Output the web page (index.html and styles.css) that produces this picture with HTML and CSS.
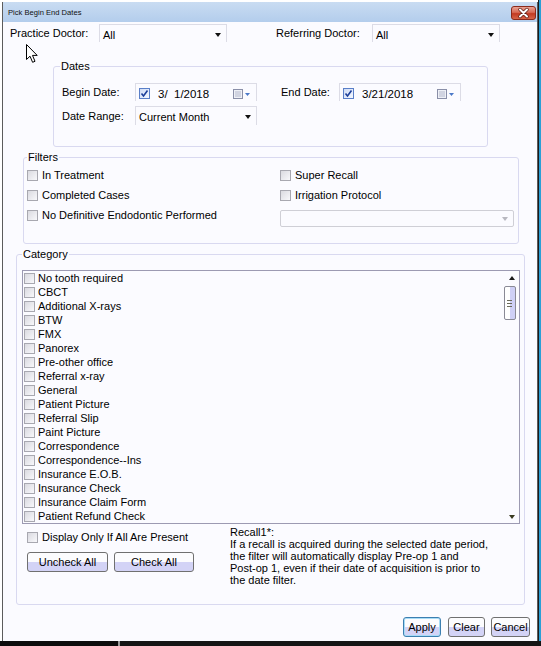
FILE: index.html
```html
<!DOCTYPE html>
<html>
<head>
<meta charset="utf-8">
<link rel="stylesheet" href="styles.css">
</head>
<body>
<div class="screen">
  <div class="window">
    <div class="titlebar">
      <span class="title">Pick Begin End Dates</span>
      <span class="close">
        <svg width="25" height="14" viewBox="0 0 25 14">
          <defs>
            <linearGradient id="cg" x1="0" y1="0" x2="0" y2="1">
              <stop offset="0" stop-color="#eaa89a"/>
              <stop offset="0.45" stop-color="#d86a55"/>
              <stop offset="0.55" stop-color="#c23a22"/>
              <stop offset="1" stop-color="#d9684c"/>
            </linearGradient>
          </defs>
          <rect x="0.5" y="0.5" width="24" height="13" rx="2.5" fill="url(#cg)" stroke="#8a2a1c"/>
          <path d="M9 3.5 L16 10.5 M16 3.5 L9 10.5" stroke="#5a1a10" stroke-width="3.4" stroke-linecap="round"/>
          <path d="M9 3.5 L16 10.5 M16 3.5 L9 10.5" stroke="#ffffff" stroke-width="2" stroke-linecap="round"/>
        </svg>
      </span>
    </div>
    <div class="body">
      <div class="doctors">
        <span class="lbl lbl-practice">Practice Doctor:</span>
        <div class="combo combo-doc"><span>All</span><i class="arrow"></i></div>
        <span class="lbl lbl-ref">Referring Doctor:</span>
        <div class="combo combo-doc"><span>All</span><i class="arrow"></i></div>
      </div>

      <fieldset class="group dates">
        <legend>Dates</legend>
        <div class="dates-grid">
          <span class="lbl">Begin Date:</span>
          <div class="datebox">
            <span class="chk checked"><svg width="9" height="9" viewBox="0 0 9 9"><path d="M1.5 4.5 L3.5 7 L7.5 1.5" fill="none" stroke="#1c3f9a" stroke-width="1.6"/></svg></span>
            <span class="dtext">3/&nbsp;&nbsp;1/2018</span>
            <svg class="cal" width="20" height="10" viewBox="0 0 20 10"><rect x="0.5" y="0.5" width="9" height="9" fill="#eef0f6" stroke="#8a8fa8"/><path d="M2 3h6M2 5h6M2 7h6" stroke="#b4b8cc"/><path d="M12 4h5l-2.5 3z" fill="#4a78c8"/></svg>
          </div>
          <span class="lbl end-lbl">End Date:</span>
          <div class="datebox">
            <span class="chk checked"><svg width="9" height="9" viewBox="0 0 9 9"><path d="M1.5 4.5 L3.5 7 L7.5 1.5" fill="none" stroke="#1c3f9a" stroke-width="1.6"/></svg></span>
            <span class="dtext">3/21/2018</span>
            <svg class="cal" width="20" height="10" viewBox="0 0 20 10"><rect x="0.5" y="0.5" width="9" height="9" fill="#eef0f6" stroke="#8a8fa8"/><path d="M2 3h6M2 5h6M2 7h6" stroke="#b4b8cc"/><path d="M12 4h5l-2.5 3z" fill="#4a78c8"/></svg>
          </div>
          <span class="lbl">Date Range:</span>
          <div class="combo combo-range"><span>Current Month</span><i class="arrow"></i></div>
        </div>
      </fieldset>

      <fieldset class="group filters">
        <legend>Filters</legend>
        <div class="filters-grid">
          <label class="cbrow"><span class="chk"></span>In Treatment</label>
          <label class="cbrow"><span class="chk"></span>Super Recall</label>
          <label class="cbrow"><span class="chk"></span>Completed Cases</label>
          <label class="cbrow"><span class="chk"></span>Irrigation Protocol</label>
          <label class="cbrow"><span class="chk"></span>No Definitive Endodontic Performed</label>
          <div class="combo-disabled"><i class="arrow light"></i></div>
        </div>
      </fieldset>

      <fieldset class="group category">
        <legend>Category</legend>
        <div class="listbox">
          <div class="items">
            <label class="item"><span class="chk"></span>No tooth required</label>
            <label class="item"><span class="chk"></span>CBCT</label>
            <label class="item"><span class="chk"></span>Additional X-rays</label>
            <label class="item"><span class="chk"></span>BTW</label>
            <label class="item"><span class="chk"></span>FMX</label>
            <label class="item"><span class="chk"></span>Panorex</label>
            <label class="item"><span class="chk"></span>Pre-other office</label>
            <label class="item"><span class="chk"></span>Referral x-ray</label>
            <label class="item"><span class="chk"></span>General</label>
            <label class="item"><span class="chk"></span>Patient Picture</label>
            <label class="item"><span class="chk"></span>Referral Slip</label>
            <label class="item"><span class="chk"></span>Paint Picture</label>
            <label class="item"><span class="chk"></span>Correspondence</label>
            <label class="item"><span class="chk"></span>Correspondence--Ins</label>
            <label class="item"><span class="chk"></span>Insurance E.O.B.</label>
            <label class="item"><span class="chk"></span>Insurance Check</label>
            <label class="item"><span class="chk"></span>Insurance Claim Form</label>
            <label class="item"><span class="chk"></span>Patient Refund Check</label>
          </div>
          <div class="scrollbar">
            <i class="sb-up"></i>
            <div class="thumb"><i class="grip"></i></div>
            <div class="sb-space"></div>
            <i class="sb-down"></i>
          </div>
        </div>
        <div class="cat-bottom">
          <div class="cat-left">
            <label class="cbrow"><span class="chk"></span>Display Only If All Are Present</label>
            <div class="btnrow">
              <button class="btn btn-uncheck">Uncheck All</button>
              <button class="btn btn-check">Check All</button>
            </div>
          </div>
          <p class="recall">Recall1*:<br>If a recall is acquired during the selected date period,<br>the filter will automatically display Pre-op 1 and<br>Post-op 1, even if their date of acquisition is prior to<br>the date filter.</p>
        </div>
      </fieldset>

      <div class="actions">
        <button class="btn btn-apply">Apply</button>
        <button class="btn btn-clear">Clear</button>
        <button class="btn btn-cancel">Cancel</button>
      </div>
    </div>
  </div>
  <div class="right-strip"></div>
  <div class="bottom-strip"></div>
  <svg class="cursor" width="13" height="20" viewBox="0 0 13 20"><path d="M0.5 0.5 L0.5 15.5 L4 12.2 L6.6 18.3 L9 17.3 L6.5 11.4 L11.2 11.4 Z" fill="#ffffff" stroke="#000000" stroke-width="1" stroke-linejoin="miter"/></svg>
</div>
</body>
</html>
```

FILE: styles.css
```css
* { box-sizing: border-box; }
html, body { margin: 0; padding: 0; }
body {
  font-family: "Liberation Sans", Arial, sans-serif;
  font-size: 11px;
  color: #000;
  background: #ffffff;
}
.screen {
  position: relative;
  width: 541px;
  height: 646px;
  overflow: hidden;
  display: grid;
  grid-template-columns: 2px 536px 3px;
  grid-template-rows: 2px 639px 5px;
  background: #ffffff;
}
.window {
  grid-column: 2;
  grid-row: 2;
  border-left: 1px solid #5c5c5c;
  border-right: 1px solid #5c5c5c;
  background: #fbfbff;
  display: flex;
  flex-direction: column;
}
.right-strip {
  grid-column: 3;
  grid-row: 1 / 3;
  background: linear-gradient(90deg, #1b1b1b 0 1px, #2b9fd6 1px);
}
.bottom-strip {
  grid-column: 1 / 4;
  grid-row: 3;
  background: linear-gradient(90deg, #0c0c0c 0 118px, #9a9a9a 118px 120px, #151515 120px);
}
.titlebar {
  height: 20px;
  background: linear-gradient(#c9dcf2, #b3cdec);
  display: flex;
  align-items: center;
  justify-content: space-between;
  padding: 0 1px 0 5px;
}
.title {
  font-size: 7.6px;
  color: #111;
  margin-top: 1px;
}
.close { display: flex; margin-top: 1px; }

.body {
  flex: 1;
  padding: 2px 0 0 7px;
  display: flex;
  flex-direction: column;
}

.doctors {
  display: flex;
  align-items: center;
  height: 18px;
}
.lbl { white-space: nowrap; }
.lbl-practice { width: 89px; }
.lbl-ref { width: 96px; margin-left: 49px; }
.combo {
  position: relative;
  height: 18px;
  border: 1px solid #dcdce6;
  border-bottom: none;
  display: flex;
  align-items: center;
  padding-left: 3px;
  padding-top: 2px;
}
.combo-doc { width: 128px; }
.arrow {
  position: absolute;
  right: 5px;
  top: 8px;
  width: 0; height: 0;
  border-left: 3px solid transparent;
  border-right: 3px solid transparent;
  border-top: 4px solid #111;
}
.arrow.light { border-top-color: #b8b8c0; }

.group {
  border: 1px solid #d9d9f0;
  border-radius: 3px;
  margin: 0;
  min-width: 0;
}
.group legend {
  padding: 0 1px;
  line-height: 13px;
}

.dates {
  margin-left: 43px;
  margin-top: 18px;
  width: 435px;
  padding: 10px 6px 21px 6px;
}
.dates-grid {
  display: grid;
  grid-template-columns: 73px 122px 82px 122px;
  grid-template-rows: 18px 19px;
  row-gap: 5px;
  align-items: center;
  padding-left: 2px;
}
.end-lbl { padding-left: 24px; }
.datebox {
  height: 18px;
  border: 1px solid #dcdce6;
  border-bottom: none;
  display: flex;
  align-items: center;
  padding-left: 3px;
  padding-top: 2px;
}
.dtext { margin-left: 8px; font-size: 11.5px; }
.cal { margin-left: auto; margin-right: 3px; }
.combo-range { height: 19px; padding-left: 3px; }

.chk {
  display: inline-flex;
  align-items: center;
  justify-content: center;
  width: 11px;
  height: 11px;
  border: 1px solid #a8a8b0;
  background: linear-gradient(135deg, #dadae0, #f8f8fb);
  flex: none;
}
.chk.checked {
  border-color: #5a7fc8;
  background: linear-gradient(135deg, #cfdcf6, #f4f8ff);
}

.filters {
  margin-left: 13px;
  margin-top: 4px;
  width: 496px;
  padding: 1px 3px 18px 3px;
}
.filters-grid {
  display: grid;
  grid-template-columns: 253px 234px;
  grid-template-rows: 20px 20px 20px;
  align-items: center;
}
.cbrow {
  display: flex;
  align-items: center;
  gap: 4px;
  white-space: nowrap;
}
.combo-disabled {
  position: relative;
  height: 17px;
  margin-top: 7px;
  border: 1px solid #cfcfd6;
  border-radius: 2px;
  background: #fbfbff;
}
.combo-disabled .arrow { top: 6px; }

.category {
  margin-left: 6px;
  margin-top: 4px;
  width: 509px;
  padding: 9px 4px 18px 5px;
}
.listbox {
  display: flex;
  width: 498px;
  height: 254px;
  border: 1px solid #9c9ab2;
  background: #fbfbff;
}
.items {
  flex: 1;
  display: flex;
  flex-direction: column;
  padding-left: 1px;
}
.item {
  height: 14px;
  display: flex;
  align-items: center;
  gap: 3px;
  white-space: nowrap;
}
.scrollbar {
  width: 16px;
  display: flex;
  flex-direction: column;
  align-items: center;
  padding: 5px 2px 4px 0;
}
.sb-up, .sb-down {
  width: 0; height: 0;
  border-left: 3px solid transparent;
  border-right: 3px solid transparent;
}
.sb-up { border-bottom: 4px solid #1a1a1a; margin-left: 3px; }
.sb-down { border-top: 4px solid #3a3a20; margin-left: 3px; }
.thumb {
  margin-top: 6px;
  width: 12px;
  height: 34px;
  border: 1px solid #8a8a96;
  border-radius: 2px;
  background: linear-gradient(90deg, #ffffff 0 5px, #cfd0f6 5px);
  display: flex;
  align-items: center;
  padding-left: 2px;
}
.grip {
  width: 5px;
  height: 7px;
  background: repeating-linear-gradient(#6a6a5a 0 1px, transparent 1px 3px);
}
.sb-space { flex: 1; }

.cat-bottom {
  display: flex;
  margin-top: 1px;
}
.cat-left {
  width: 208px;
  padding-left: 5px;
  padding-top: 6px;
}
.btnrow {
  display: flex;
  gap: 6px;
  margin-top: 9px;
}
.btn {
  font-family: "Liberation Sans", Arial, sans-serif;
  font-size: 11px;
  height: 20px;
  padding: 0;
  border: 1px solid #707070;
  border-radius: 3px;
  background: linear-gradient(#fcfcfe 0 52%, #d3d3f6 52%);
  color: #000;
  text-align: center;
}
.btn-uncheck { width: 81px; }
.btn-check { width: 80px; }
.recall {
  margin: 0;
  line-height: 12px;
  padding-top: 1px;
}

.actions {
  display: flex;
  justify-content: flex-end;
  gap: 7px;
  padding-right: 7px;
  margin-top: 12px;
}
.btn-apply { width: 38px; border-color: #3c7fb1; box-shadow: inset 0 0 0 1px #a8dcf6; }
.btn-clear { width: 37px; }
.btn-cancel { width: 39px; margin-left: -1px; }

.cursor {
  position: absolute;
  left: 26px;
  top: 44px;
}
```
